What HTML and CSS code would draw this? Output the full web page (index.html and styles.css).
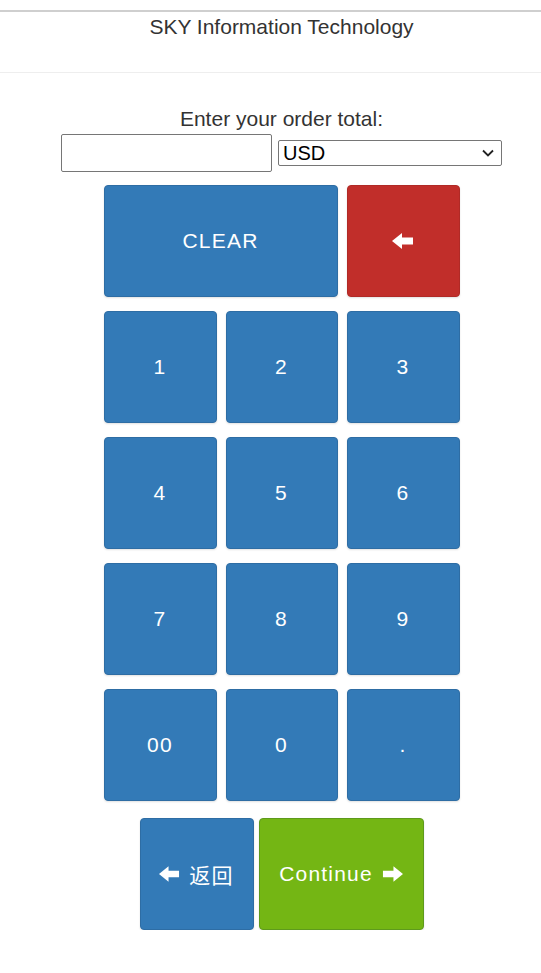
FILE: index.html
```html
<!DOCTYPE html>
<html>
<head>
<meta charset="utf-8">
<title>SKY Information Technology</title>
<link rel="stylesheet" href="styles.css">
</head>
<body>
<div class="page">
  <header class="header">SKY Information Technology</header>
  <main class="main">
    <label class="label" for="amount">Enter your order total:</label>
    <div class="entry">
      <input id="amount" class="amount" type="text">
      <div class="select-wrap">
        <select class="currency"><option>USD</option></select>
        <svg class="chevron" width="12" height="8" viewBox="0 0 12 8"><polyline points="1,1.5 6,6.5 11,1.5" fill="none" stroke="#222" stroke-width="1.8"/></svg>
      </div>
    </div>
    <div class="keypad">
      <button class="key key-wide">CLEAR</button>
      <button class="key key-danger" aria-label="Backspace">
        <svg class="arrow" width="22" height="16" viewBox="0 0 22 16"><polygon points="0,8 10,0 10,4.5 21,4.5 21,11.5 10,11.5 10,16" fill="#fff"/></svg>
      </button>
      <button class="key">1</button>
      <button class="key">2</button>
      <button class="key">3</button>
      <button class="key">4</button>
      <button class="key">5</button>
      <button class="key">6</button>
      <button class="key">7</button>
      <button class="key">8</button>
      <button class="key">9</button>
      <button class="key">00</button>
      <button class="key">0</button>
      <button class="key">.</button>
    </div>
    <div class="actions">
      <button class="key back">
        <svg class="arrow" width="21" height="16" viewBox="0 0 22 16"><polygon points="0,8 10,0 10,4.5 21,4.5 21,11.5 10,11.5 10,16" fill="#fff"/></svg>
        <span>返回</span>
      </button>
      <button class="key key-success continue">
        <span>Continue</span>
        <svg class="arrow" width="21" height="16" viewBox="0 0 22 16"><polygon points="22,8 12,0 12,4.5 1,4.5 1,11.5 12,11.5 12,16" fill="#fff"/></svg>
      </button>
    </div>
  </main>
</div>
</body>
</html>
```

FILE: styles.css
```css
html, body {
  margin: 0;
  padding: 0;
  background: #fff;
}

body {
  font-family: "Liberation Sans", Arial, "Noto Sans CJK SC", sans-serif;
  color: #333;
}

.page {
  margin-top: 10px;
  border-top: 2px solid #cfcfcf;
}

.header {
  padding: 4px 0 0 22px;
  height: 56px;
  border-bottom: 1px solid #eee;
  text-align: center;
  font-size: 21px;
  line-height: 22px;
}

.main {
  padding-left: 22px;
  display: flex;
  flex-direction: column;
  align-items: center;
}

.label {
  margin-top: 35px;
  font-size: 21px;
  line-height: 22px;
  color: #333;
}

.entry {
  margin-top: 4px;
  display: flex;
  align-items: center;
  gap: 6px;
  width: 441px;
}

.amount {
  box-sizing: border-box;
  width: 211px;
  height: 38px;
  margin: 0;
  border: 1px solid #767676;
  border-radius: 2px;
  font-family: inherit;
  font-size: 20px;
  padding: 2px 4px;
}

.select-wrap {
  position: relative;
  flex: 1;
  display: flex;
}

.currency {
  box-sizing: border-box;
  width: 100%;
  height: 26px;
  margin: 0;
  border: 1px solid #767676;
  border-radius: 2px;
  background: #fff;
  color: #000;
  font-family: inherit;
  font-size: 20px;
  padding: 0 4px;
  appearance: none;
  -webkit-appearance: none;
}

.chevron {
  position: absolute;
  right: 8px;
  top: 9px;
  pointer-events: none;
}

.keypad {
  margin-top: 13px;
  display: grid;
  grid-template-columns: 113px 112px 113px;
  grid-auto-rows: 112px;
  column-gap: 9px;
  row-gap: 14px;
}

.key {
  box-sizing: border-box;
  margin: 0;
  border: 1px solid #2e6da4;
  border-radius: 4px;
  background: #337ab7;
  color: #fff;
  font-family: "Liberation Sans", Arial, "Noto Sans CJK SC", sans-serif;
  font-size: 21px;
  letter-spacing: 1.2px;
  display: flex;
  align-items: center;
  justify-content: center;
  gap: 9px;
  box-shadow: 0 1px 2px rgba(0, 0, 0, 0.12);
  padding: 0;
  cursor: pointer;
}

.key-wide {
  grid-column: span 2;
}

.key-danger {
  background: #c12e2a;
  border-color: #b02a26;
}

.key-success {
  background: #74b614;
  border-color: #5e9a1c;
}

.arrow {
  display: block;
  flex: none;
}

.actions {
  margin-top: 17px;
  display: flex;
  gap: 5px;
}

.back {
  width: 114px;
  height: 112px;
}

.continue {
  width: 165px;
  height: 112px;
}
```
